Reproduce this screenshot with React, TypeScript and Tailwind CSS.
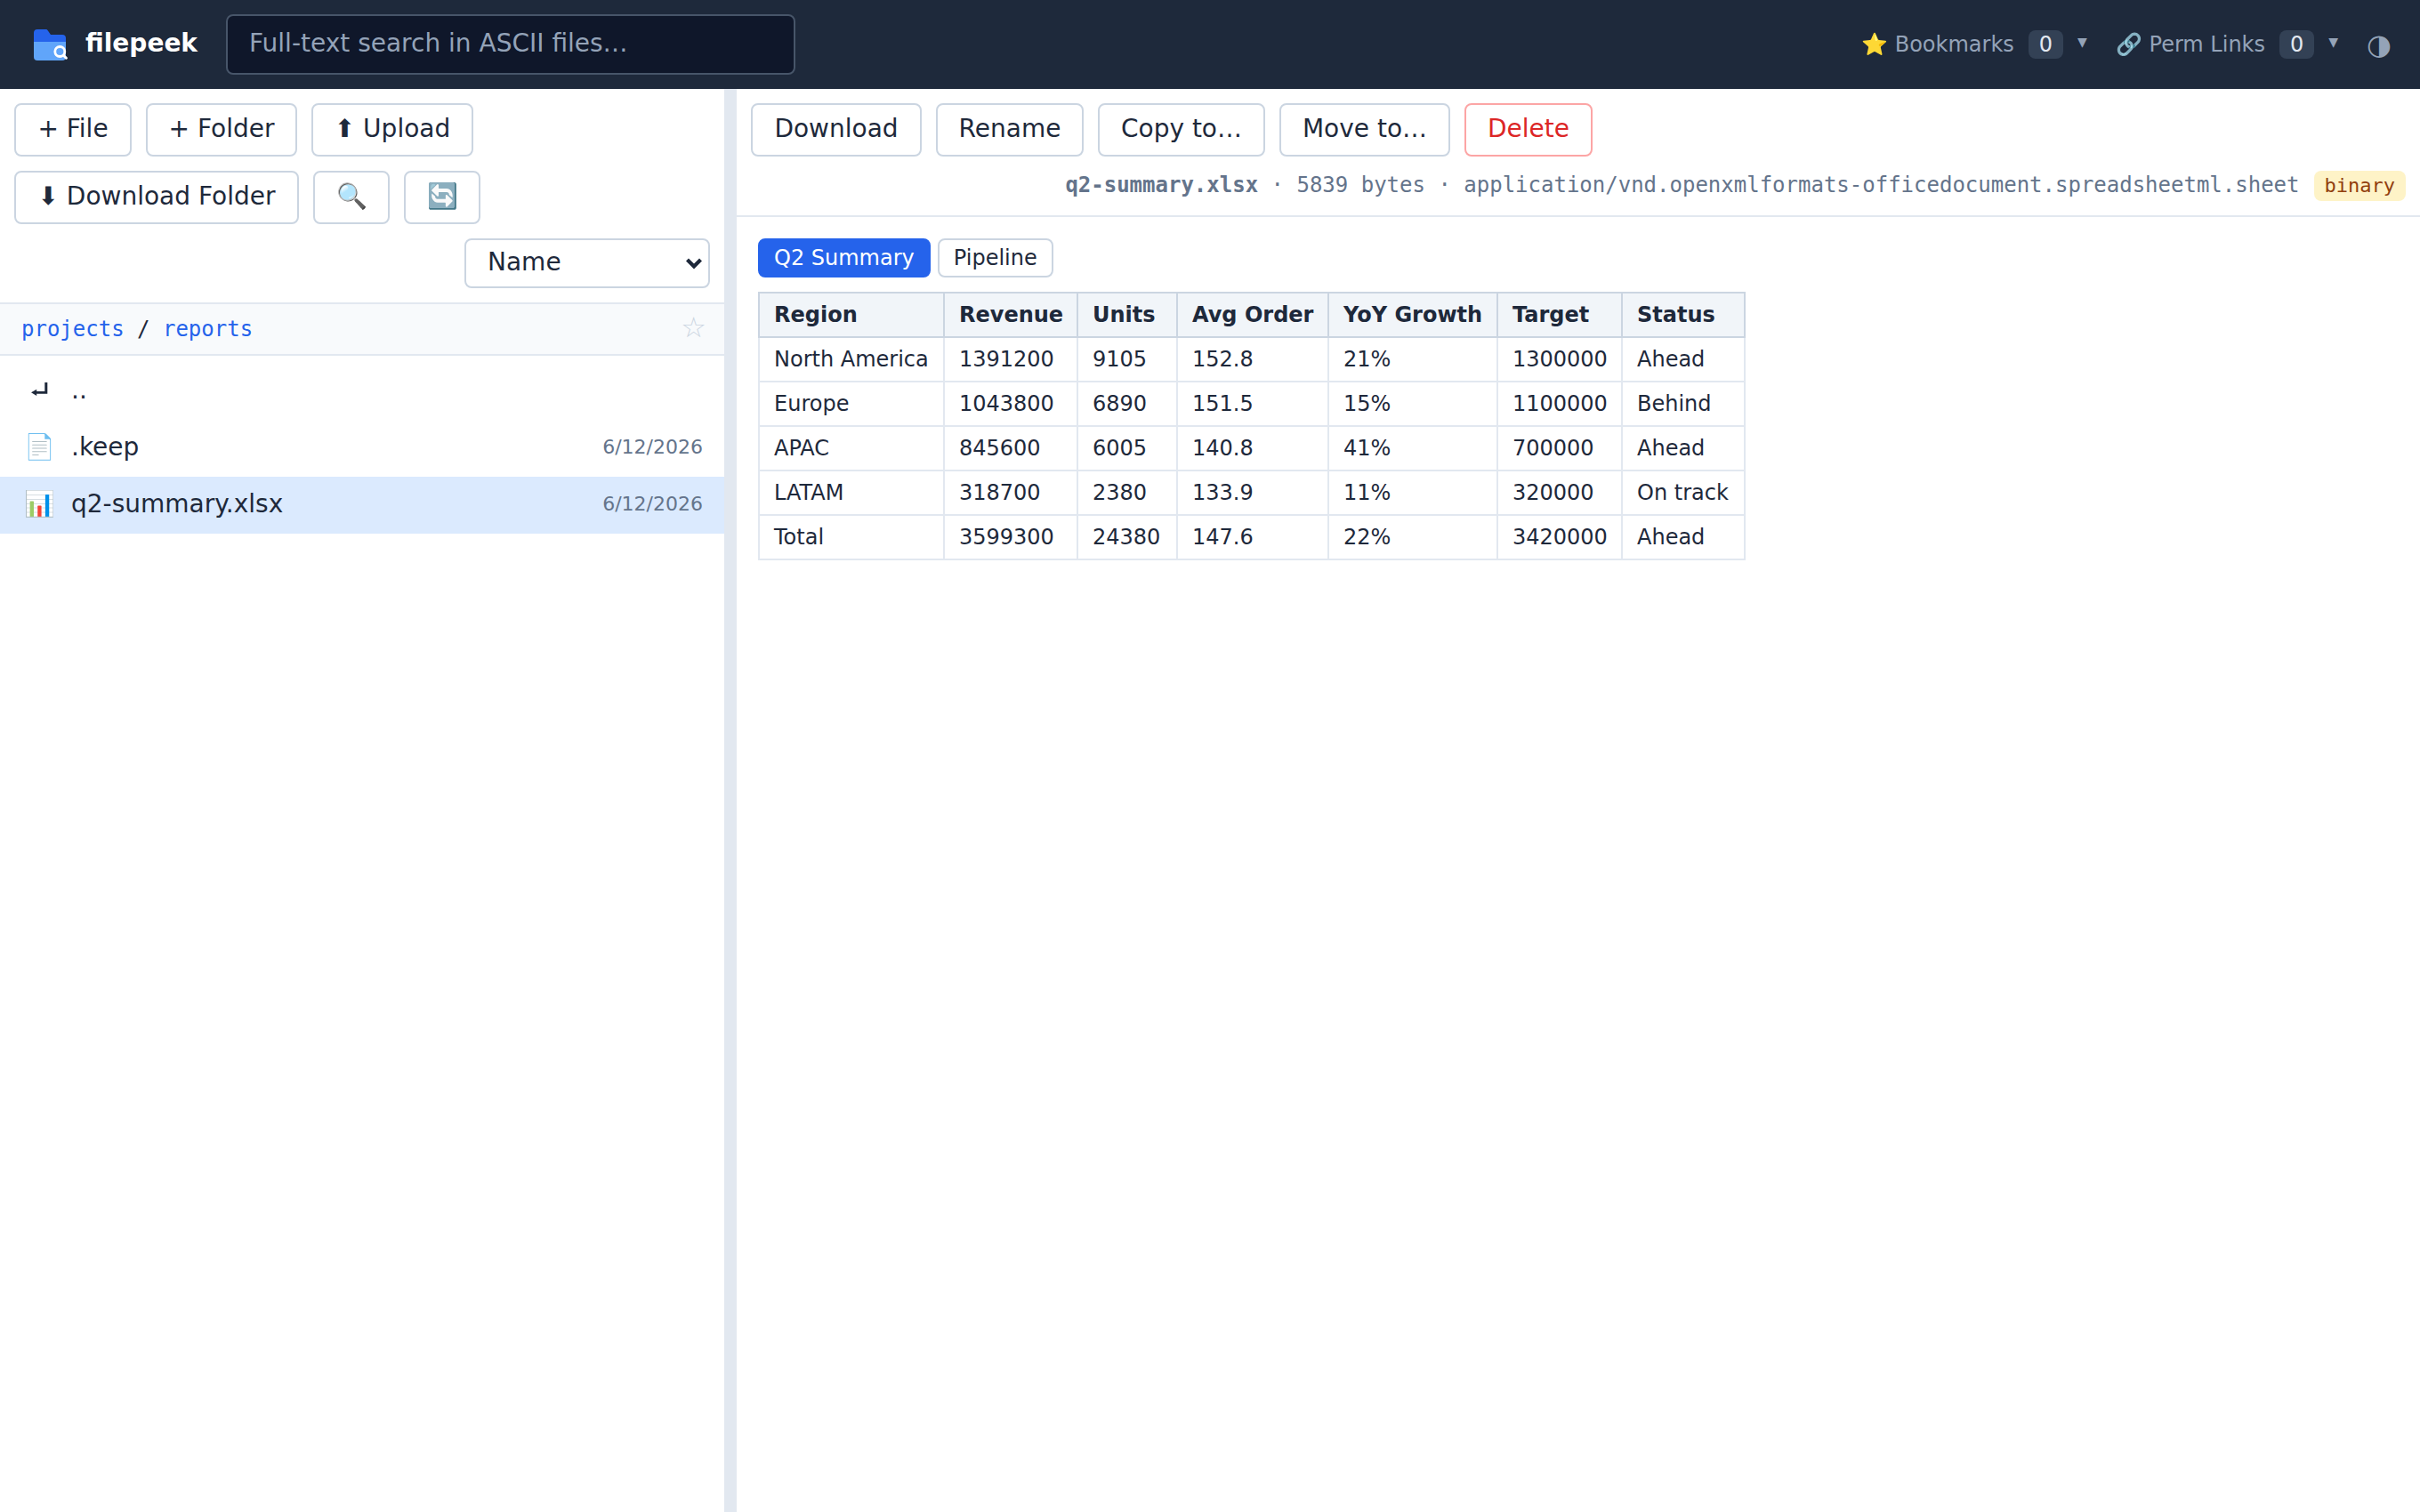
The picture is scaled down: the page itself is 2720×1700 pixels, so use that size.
import React, { useState } from "react";

interface FileEntry {
  icon: React.ReactNode;
  name: string;
  date?: string;
}

interface Sheet {
  name: string;
  header: string[];
  rows: string[][];
}

const UpIcon = () => (
  <svg width="40" height="32" viewBox="0 0 40 32" fill="#1e293b">
    <path d="M11 18.3l6.2-3.6v2.3h9.1V7h3v12.7H17.2v2.3z" />
  </svg>
);

const files: FileEntry[] = [
  { icon: <UpIcon />, name: ".." },
  { icon: "📄", name: ".keep", date: "6/12/2026" },
  { icon: "📊", name: "q2-summary.xlsx", date: "6/12/2026" },
];

const columnWidths = [
  "w-[208px]",
  "w-[150px]",
  "w-[112px]",
  "w-[170px]",
  "w-[190px]",
  "w-[140px]",
  "w-[138px]",
];

const sheets: Sheet[] = [
  {
    name: "Q2 Summary",
    header: ["Region", "Revenue", "Units", "Avg Order", "YoY Growth", "Target", "Status"],
    rows: [
      ["North America", "1391200", "9105", "152.8", "21%", "1300000", "Ahead"],
      ["Europe", "1043800", "6890", "151.5", "15%", "1100000", "Behind"],
      ["APAC", "845600", "6005", "140.8", "41%", "700000", "Ahead"],
      ["LATAM", "318700", "2380", "133.9", "11%", "320000", "On track"],
      ["Total", "3599300", "24380", "147.6", "22%", "3420000", "Ahead"],
    ],
  },
  { name: "Pipeline", header: [], rows: [] },
];

const Logo = () => (
  <svg width="48" height="48" viewBox="0 0 48 48" fill="none" className="shrink-0">
    <path
      d="M6 11a4 4 0 0 1 4-4h9.5c1 0 1.6.4 2.2 1.2L25 13h13a4 4 0 0 1 4 4v8H6z"
      fill="#2563eb"
    />
    <path d="M6 21h36v17a4 4 0 0 1-4 4H10a4 4 0 0 1-4-4z" fill="#60a5fa" />
    <circle cx="35.3" cy="32" r="5.5" stroke="#fff" strokeWidth="2.8" />
    <path d="M39.4 36.2l3 3" stroke="#fff" strokeWidth="3" strokeLinecap="round" />
  </svg>
);

interface ButtonProps {
  children: React.ReactNode;
  width: string;
  danger?: boolean;
}

const Button = ({ children, width, danger }: ButtonProps) => (
  <button
    className={`h-[60px] shrink-0 rounded-lg border-2 bg-white pb-0.5 text-center text-[28px] leading-[32px] whitespace-nowrap ${width} ${
      danger ? "border-[#fca5a5] text-[#dc2626]" : "border-[#cbd5e1] text-[#1e293b]"
    }`}
  >
    {children}
  </button>
);

const HeaderMenu = ({ icon, label, count }: { icon: string; label: string; count: number }) => (
  <div className="flex items-center text-2xl leading-7 text-[#94a3b8]">
    <span className="whitespace-nowrap">
      {icon} {label}
    </span>
    <span className="ml-4 flex h-8 items-center rounded-lg bg-[#334155] px-3 text-[#e2e8f0]">
      {count}
    </span>
    <span className="ml-4 pb-1.5 text-[14px] leading-none">▼</span>
  </div>
);

export default function App() {
  const [selected, setSelected] = useState("q2-summary.xlsx");
  const [activeSheet, setActiveSheet] = useState(0);
  const sheet = sheets[activeSheet];

  return (
    <div className="flex h-screen flex-col overflow-hidden bg-white font-['DejaVu_Sans',sans-serif] text-[28px] text-[#1e293b]">
      {/* Top bar */}
      <header className="flex h-[100px] shrink-0 items-center bg-[#1e293b] px-8">
        <Logo />
        <span className="ml-4 w-[126px] pb-0.5 font-bold leading-8 text-white">filepeek</span>
        <input
          type="text"
          placeholder="Full-text search in ASCII files…"
          className="ml-8 h-[68px] w-[640px] rounded-lg border-2 border-[#475569] bg-[#0f172a] px-6 pb-1 text-[28px] text-white placeholder:text-[#94a3b8]"
        />
        <div className="ml-auto flex items-center gap-8">
          <HeaderMenu icon="⭐" label="Bookmarks" count={0} />
          <HeaderMenu icon="🔗" label="Perm Links" count={0} />
          <button className="text-[32px] leading-none text-[#94a3b8]">◑</button>
        </div>
      </header>

      <div className="flex min-h-0 flex-1">
        {/* File browser */}
        <aside className="w-[814px] shrink-0">
          <div className="flex flex-wrap gap-4 p-4">
            <Button width="w-[132px]">+ File</Button>
            <Button width="w-[170px]">+ Folder</Button>
            <Button width="w-[182px]">⬆ Upload</Button>
            <div className="flex gap-4">
              <Button width="w-[320px]">⬇ Download Folder</Button>
              <Button width="w-[86px]">🔍</Button>
              <Button width="w-[86px]">🔄</Button>
            </div>
            <div className="relative ml-auto">
              <select className="block h-14 w-[276px] appearance-none rounded-lg border-2 border-[#cbd5e1] bg-white px-6 pb-0.5 text-[28px] text-[#1e293b]">
                <option>Name</option>
                <option>Date</option>
                <option>Size</option>
              </select>
              <svg
                width="18"
                height="13"
                viewBox="0 0 18 13"
                fill="none"
                className="pointer-events-none absolute top-[22px] right-[9px]"
              >
                <path d="M1.5 2L9 9.5L16.5 2" stroke="#1e293b" strokeWidth="4.2" />
              </svg>
            </div>
          </div>

          <div className="flex h-[60px] items-center border-y-2 border-[#e2e8f0] bg-[#f8fafc] px-6 font-['DejaVu_Sans_Mono',monospace] text-2xl leading-7">
            <a className="text-[#2563eb]">projects</a>
            <span className="whitespace-pre"> / </span>
            <a className="text-[#2563eb]">reports</a>
            <button className="ml-auto -mr-1 pb-1 font-['DejaVu_Sans',sans-serif] text-[32px] leading-8 text-[#cbd5e1]">
              ☆
            </button>
          </div>

          <ul className="py-2">
            {files.map((file) => (
              <li
                key={file.name}
                onClick={() => setSelected(file.name)}
                className={`flex h-16 items-center gap-4 px-6 ${
                  file.name === selected ? "bg-[#dbeafe]" : ""
                }`}
              >
                <span className="w-10 pb-0.5 text-center leading-8">{file.icon}</span>
                <span className="flex-1 pb-0.5 leading-8">{file.name}</span>
                <span className="pb-0.5 text-[22px] leading-7 text-[#64748b]">{file.date}</span>
              </li>
            ))}
          </ul>
        </aside>

        <div className="w-[14px] shrink-0 cursor-col-resize bg-[#e2e8f0]" />

        {/* Preview */}
        <main className="min-w-0 flex-1">
          <div className="h-36 border-b-2 border-[#e2e8f0] px-4 pt-4">
            <div className="flex gap-4">
              <Button width="w-[192px]">Download</Button>
              <Button width="w-[166px]">Rename</Button>
              <Button width="w-[188px]">Copy to…</Button>
              <Button width="w-[192px]">Move to…</Button>
              <Button width="w-[144px]" danger>
                Delete
              </Button>
            </div>
            <div className="mt-4 flex items-center justify-end font-['DejaVu_Sans_Mono',monospace] text-2xl leading-7 text-[#64748b]">
              <span className="pb-0.5">
                <strong className="font-bold">q2-summary.xlsx</strong> · 5839 bytes ·
                application/vnd.openxmlformats-officedocument.spreadsheetml.sheet
              </span>
              <span className="ml-4 flex h-[34px] items-center rounded-lg bg-[#fef3c7] px-3 text-[22px] text-[#92400e]">
                binary
              </span>
            </div>
          </div>

          <div className="p-6">
            <div className="mb-4 flex gap-2">
              {sheets.map((s, i) => (
                <button
                  key={s.name}
                  onClick={() => setActiveSheet(i)}
                  className={`h-11 rounded-lg border-2 px-4 text-2xl leading-7 ${
                    i === activeSheet
                      ? "border-[#2563eb] bg-[#2563eb] text-white"
                      : "border-[#cbd5e1] bg-white text-[#1e293b]"
                  }`}
                >
                  {s.name}
                </button>
              ))}
            </div>

            <table className="w-[1110px] table-fixed border-collapse text-2xl leading-7">
              <colgroup>
                {columnWidths.map((width, i) => (
                  <col key={i} className={width} />
                ))}
              </colgroup>
              <thead>
                <tr>
                  {sheet.header.map((col) => (
                    <th
                      key={col}
                      className="border-2 border-[#cbd5e1] bg-[#f1f5f9] py-[10px] pl-4 text-left font-bold whitespace-nowrap"
                    >
                      {col}
                    </th>
                  ))}
                </tr>
              </thead>
              <tbody>
                {sheet.rows.map((row) => (
                  <tr key={row[0]}>
                    {row.map((cell, i) => (
                      <td key={i} className="border-2 border-[#e2e8f0] py-[10px] pl-4 whitespace-nowrap">
                        {cell}
                      </td>
                    ))}
                  </tr>
                ))}
              </tbody>
            </table>
          </div>
        </main>
      </div>
    </div>
  );
}
